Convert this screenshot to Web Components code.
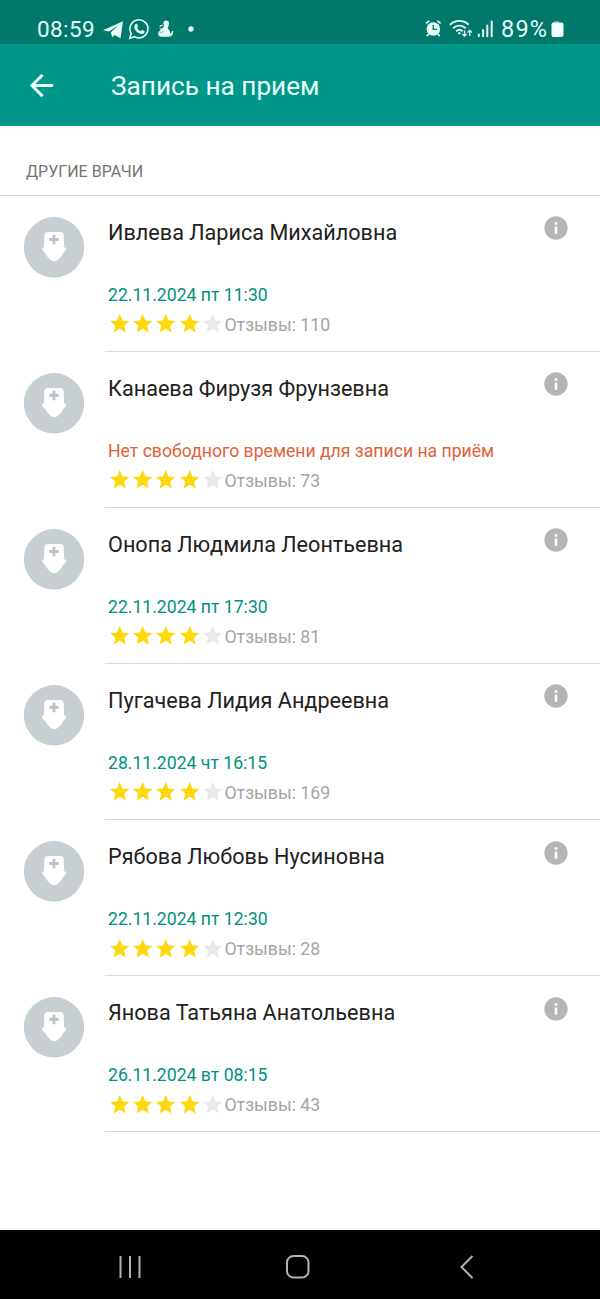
<!DOCTYPE html>
<html lang="ru">
<head>
<meta charset="utf-8">
<title>Запись на прием</title>
<style>
html,body{margin:0;padding:0;background:#fff}
body{font-family:Roboto,"Noto Sans",sans-serif}
</style>
</head>
<body>
<clinic-app></clinic-app>
<script>
const define = (name, render) => customElements.define(name, class extends HTMLElement {
  constructor() {
    super();
    this.attachShadow({mode: 'open'});
  }
  connectedCallback() {
    const t = document.createElement('template');
    t.innerHTML = render(this);
    this.shadowRoot.replaceChildren(t.content.cloneNode(true));
  }
});

define('status-bar', () => `
<style>
:host{display:flex;align-items:flex-start;box-sizing:border-box;height:44px;padding:0 36px 0 37px;background:#00796b;color:#e6fbf6;font-size:22.500px;line-height:26px}
span{margin-top:16px;white-space:nowrap}
.time{width:66px;letter-spacing:.4px}
.bat{box-sizing:border-box;width:50px;padding-left:1px;font-size:23.500px;letter-spacing:1.200px}
.gap{flex:1}
svg{display:block;flex:none}
</style>
<span class="time">08:59</span>
<svg width="94" height="44" viewBox="103 0 94 44" fill="currentColor">
  <path d="M103 30.200 123 21.200 120.500 38.200 114.800 34.900 112.200 37.200 110.800 32.200 118.300 25.500 108.800 31.600Z"/>
  <path d="M129.800 38.200l1.400-4.800a9 9 0 1 1 3.400 3.300Z" fill="none" stroke="currentColor" stroke-width="1.600"/>
  <path d="M135.700 24.100c.8-.5 1.400-.2 1.700.7l.6 1.500c.2.5-.8 1.300-.8 1.700.8 1.500 2 2.600 3.500 3.200.4.1 1.200-1.300 1.700-1.100l1.900.9c.6.3.3 1.600-.4 2.200-1.300 1.200-3.100.9-4.800 0-2.400-1.200-4.200-3.300-4.700-5.300-.4-1.600.2-3.100 1.300-3.800Z"/>
  <circle cx="166.200" cy="23.300" r="2.800"/>
  <path d="M163.600 25.300h5.200c-.3 1.400-.7 2.200-1.200 2.900 1.700 1.400 2.700 3.300 2.500 5.400 1.200-.1 1.800-1 1.700-2.700l1.400.1c.1 3.600-1.500 5.600-4.600 5.700h-7c-2.400 0-3.800-1.500-3.500-3.400.2-1.500 1.400-2.400 2.700-3.100l-1.500-1.400 2.800-.3 1.900-1.700Z"/>
  <path d="M160.300 27.200c-.6-1.300.6-2.500 2.600-1.400" fill="none" stroke="currentColor" stroke-width="1.200"/>
  <path d="M160.500 32.500c1.500.2 2.400-.4 3-1.700" fill="none" stroke="#00796b" stroke-width=".5"/>
  <circle cx="191" cy="29" r="2.700"/>
</svg>
<div class="gap"></div>
<svg width="76" height="44" viewBox="424.200 0 76 44" fill="none" stroke="currentColor">
  <circle cx="433.500" cy="29" r="6.800" fill="currentColor" stroke="none"/>
  <path d="M426.200 23.400l3.300-2.500M440.800 23.400l-3.300-2.500M429 34l-2 2.200M438 34l2 2.200" stroke-width="1.800"/>
  <path d="M433.500 25v4.400h3.600" stroke="#00796b" stroke-width="1.400"/>
  <path d="M450.200 24.800c5.200-5.200 13.400-5.200 18.700 0M453.300 28.200c3.500-3.400 9.100-3.400 12.600 0M456.400 31.300c1.900-1.700 4.500-1.700 6.300 0" stroke-width="1.900"/>
  <circle cx="459.500" cy="33.300" r="1.300" fill="currentColor" stroke="none"/>
  <path d="M464.700 30.500v5.500m-2.200-2 2.200 2.200 2.200-2.200M469.900 36v-5.500m-2.200 2 2.200-2.200 2.200 2.200" stroke-width="1.300"/>
  <path d="M479 34.500v1.800M483.300 30v6.300M487.500 25.500v10.800M491.900 21.500v14.800" stroke-width="2" stroke-linecap="round"/>
</svg>
<span class="bat">89%</span>
<svg width="14" height="44" viewBox="551 0 14 44"><path d="M555 23v-2h5v2" fill="#66b3a8"/><rect x="552.500" y="22.500" width="12" height="14.500" rx="2" fill="#effffc"/></svg>
`);

define('app-header', () => `
<style>
:host{display:flex;align-items:center;box-sizing:border-box;height:82px;padding:2px 24px 0;background:#009688;color:#e9fffb}
svg{width:35px;height:35px;flex:none;margin-right:52px;margin-bottom:2px}
h1{margin:0;font-weight:400;font-size:26.200px;line-height:32px;white-space:nowrap}
</style>
<svg viewBox="0 0 24 24" fill="currentColor"><path d="M20 11H7.830l5.590-5.590L12 4l-8 8 8 8 1.410-1.410L7.830 13H20v-2z"/></svg>
<h1><slot></slot></h1>`);

define('section-title', () => `
<style>
:host{display:block;box-sizing:border-box;height:70px;padding:35px 26px 0;border-bottom:1.500px solid #dcdcdc;color:#757575;font-size:16.050px;line-height:22px;white-space:nowrap}
</style><slot></slot>`);

define('doctor-avatar', () => `
<style>:host{display:block;width:60px;height:61px}svg{display:block}</style>
<svg width="60" height="61" viewBox="0 0 60 61"><circle cx="30" cy="30.300" r="30.200" fill="#c8cfd3"/>
<path d="M20.400 18Q20.800 15 23.500 15H36.500Q39.200 15 39.600 18L40.200 30.200L42.200 31Q42 34.500 39.300 35.800C37.500 40 33.500 44.200 30.300 44.200S23 40 21 35.800Q18.200 34.500 18 31L19.900 30.200Z" fill="#fff"/>
<path d="M30 17.800v9.400M25.300 22.500h9.400" stroke="#bfc3c5" stroke-width="2.800"/></svg>`);

define('star-rating', el => `
<style>:host{display:flex}svg{display:block;width:23.400px;height:23.400px;flex:none}</style>
${[1,2,3,4,5].map(i => `<svg viewBox="0 0 24 24" fill="${i <= +el.getAttribute('value') ? '#fdd80d' : '#e8e8e8'}"><path d="M12 17.270 18.180 21l-1.640-7.030L22 9.240l-7.190-.61L12 2 9.190 8.630 2 9.240l5.460 4.730L5.820 21z"/></svg>`).join('')}`);

define('info-icon', () => `
<style>:host{display:block}svg{display:block;margin-top:.300px}</style>
<svg width="28" height="28" viewBox="0 0 24 24" fill="#b5b5b5"><path d="M12 2C6.480 2 2 6.480 2 12s4.480 10 10 10 10-4.480 10-10S17.520 2 12 2zm1.100 15h-2.200v-6.200h2.200v6.200zm0-7.800h-2.200V7h2.200v2.200z"/></svg>`);

define('doctor-row', el => `
<style>
:host{display:grid;grid-template-columns:105px 1fr;height:156.070px}
doctor-avatar{margin:21px 0 0 24px}
.body{display:flex;flex-direction:column;box-sizing:border-box;border-bottom:1.500px solid #dcdcdc;padding:18px 30px 0 3px;white-space:nowrap}
.top{display:flex;justify-content:space-between;height:66px}
.name{font-size:21.630px;line-height:26px;padding-top:6px;color:#212121}
.slot{font-size:17.620px;line-height:24px;padding-top:3px;color:#009081}
.slot.none{color:#e0623a}
.rating{display:flex;align-items:center;height:24px;margin:5px 0 0;font-size:17.700px;color:#a5a5a5}
star-rating{margin:0 0 0 -.500px}
.rating span{padding-top:1px}
</style>
<doctor-avatar></doctor-avatar>
<div class="body">
  <div class="top"><div class="name"><slot></slot></div><info-icon></info-icon></div>
  <div class="slot${el.hasAttribute('full') ? ' none' : ''}">${el.getAttribute('time')}</div>
  <div class="rating"><star-rating value="4"></star-rating><span>Отзывы: ${el.getAttribute('reviews')}</span></div>
</div>`);

define('system-nav', () => `
<style>:host{display:grid;grid-template-columns:1fr 1fr 1fr;height:69px;padding:0 49px 0 46px;background:#000;align-items:center;justify-items:center}
svg{display:block;fill:none;stroke:#b4b4b4;stroke-width:2;margin-top:4px}</style>
<svg width="24" height="24" viewBox="0 0 24 24"><path d="M2.500 1v22M12 1v22M21.500 1v22"/></svg>
<svg width="24" height="24" viewBox="0 0 24 24"><rect x="1" y="1" width="21.500" height="21.500" rx="6.500"/></svg>
<svg width="24" height="24" viewBox="0 0 24 24"><path d="M17.500 1 6.500 12 17.500 23"/></svg>`);

define('clinic-app', () => `
<style>
:host{display:flex;flex-direction:column;width:600px;height:1299px;overflow:hidden;background:#fff}
main{flex:1;min-height:0}
</style>
<status-bar></status-bar>
<app-header>Запись на прием</app-header>
<main>
<section-title>ДРУГИЕ ВРАЧИ</section-title>
<doctor-row time="22.11.2024 пт 11:30" reviews="110">Ивлева Лариса Михайловна</doctor-row>
<doctor-row full time="Нет свободного времени для записи на приём" reviews="73">Канаева Фирузя Фрунзевна</doctor-row>
<doctor-row time="22.11.2024 пт 17:30" reviews="81">Онопа Людмила Леонтьевна</doctor-row>
<doctor-row time="28.11.2024 чт 16:15" reviews="169">Пугачева Лидия Андреевна</doctor-row>
<doctor-row time="22.11.2024 пт 12:30" reviews="28">Рябова Любовь Нусиновна</doctor-row>
<doctor-row time="26.11.2024 вт 08:15" reviews="43">Янова Татьяна Анатольевна</doctor-row>
</main>
<system-nav></system-nav>`);
</script>
</body>
</html>
